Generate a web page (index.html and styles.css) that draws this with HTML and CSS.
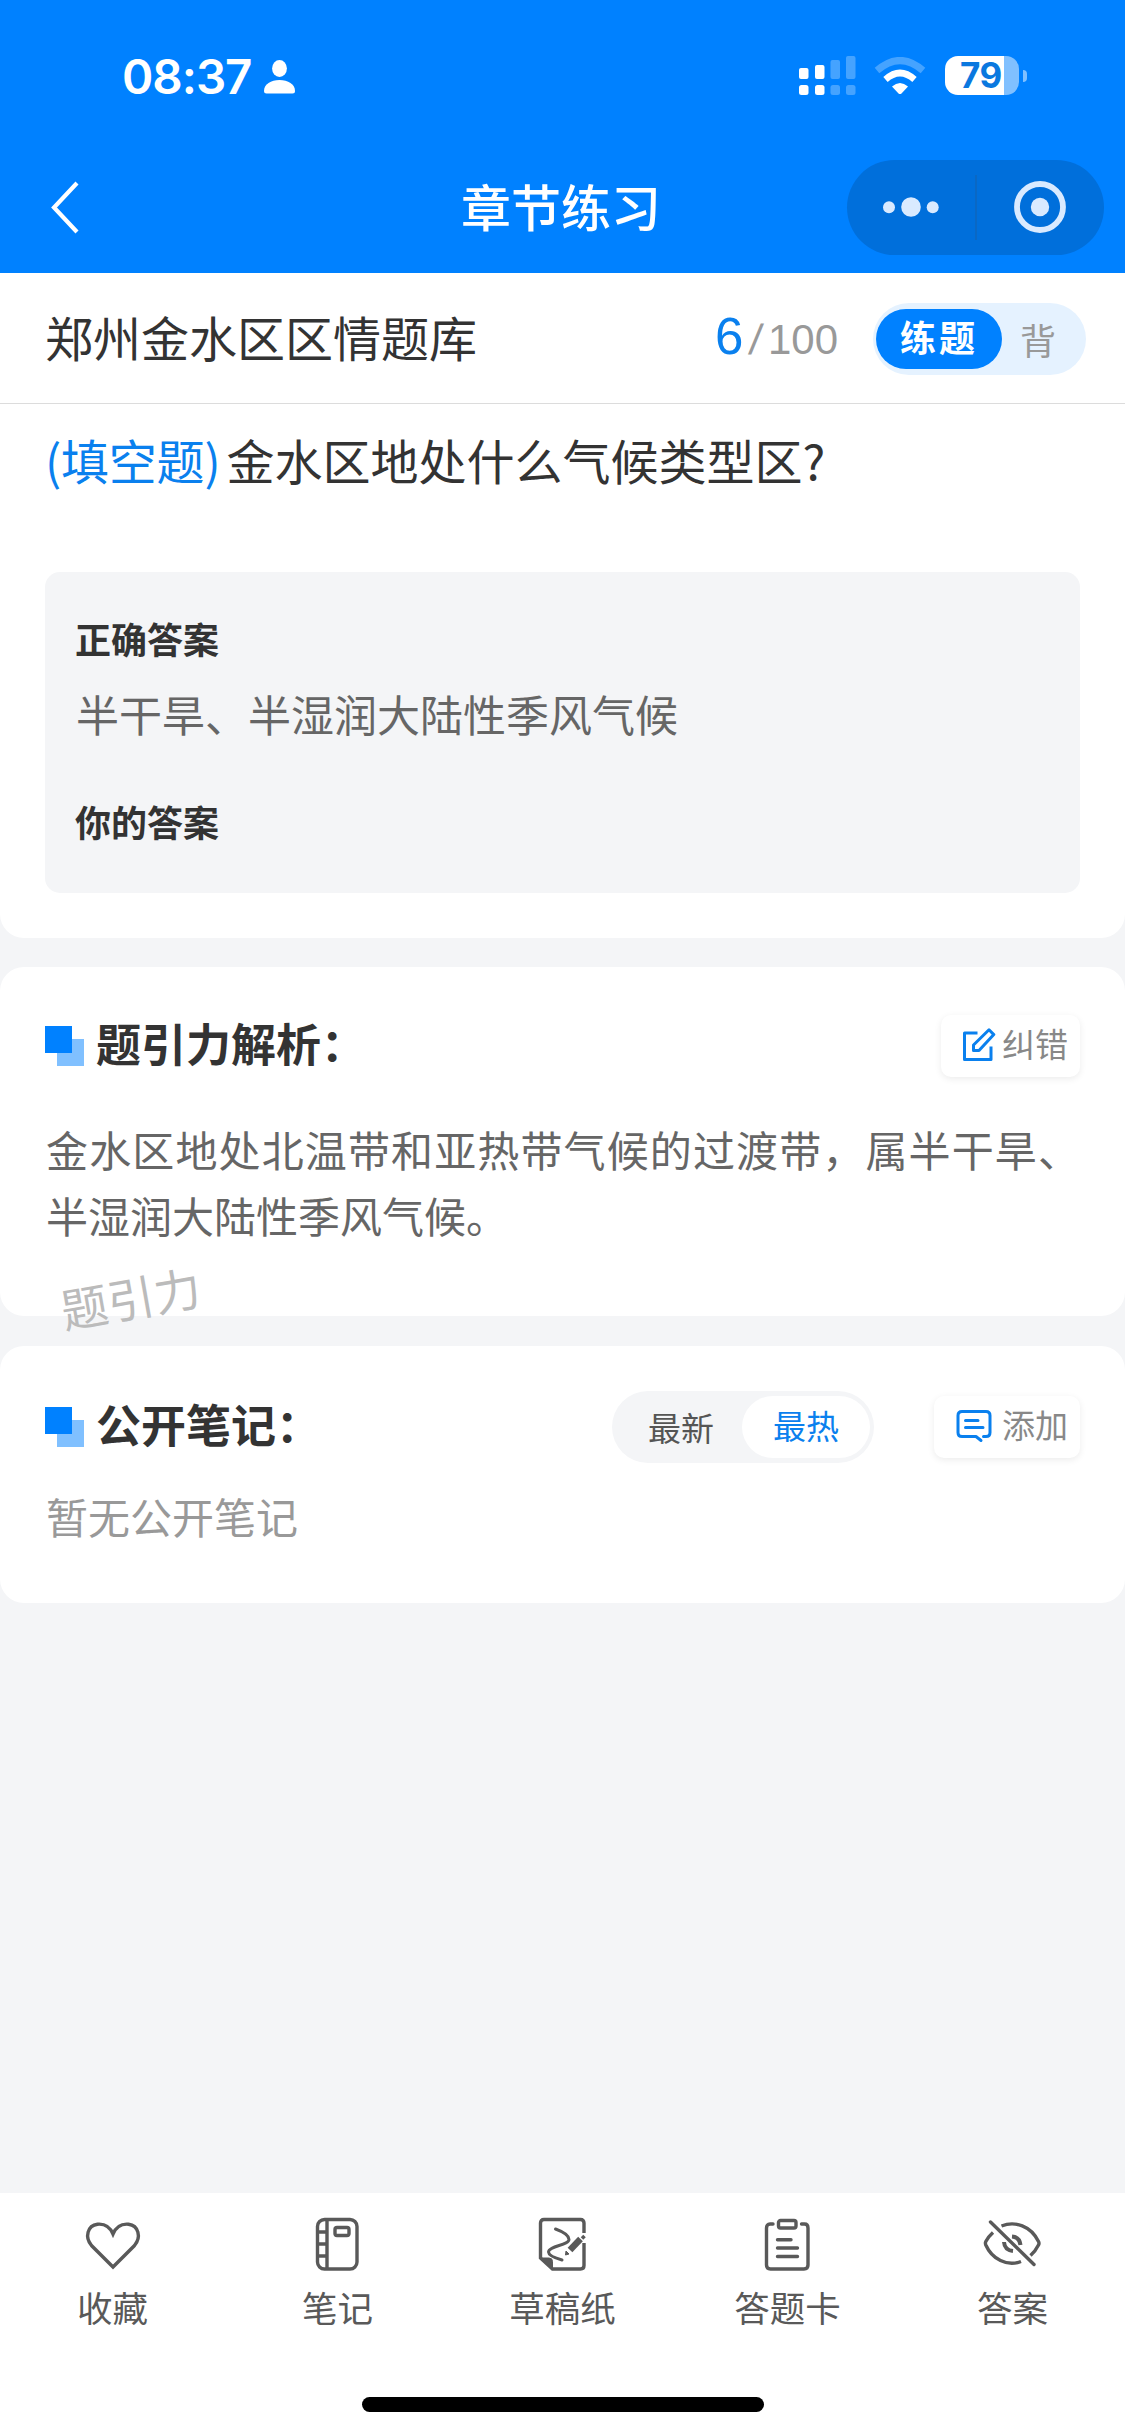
FILE: index.html
```html
<!DOCTYPE html>
<html lang="zh-CN">
<head>
<meta charset="UTF-8">
<title>章节练习</title>
<link rel="stylesheet" href="styles.css">
</head>
<body>
<div class="app">
  <header class="header">
    <div class="status">
      <div class="clock">
        <span class="time">08:37</span>
        <svg class="person" width="31" height="34" viewBox="0 0 31 34" fill="#fff"><ellipse cx="15.5" cy="8.5" rx="7.4" ry="8.5"/><path d="M0 31C0 24 7 20 15.500 20S31 24 31 31Q31 33.500 28.500 33.500H2.500Q0 33.500 0 31Z"/></svg>
      </div>
      <div class="indicators">
        <svg width="57" height="39" viewBox="0 0 57 39" fill="#fff"><rect y="12" width="9.500" height="11" rx="2"/><rect x="16" y="9" width="9.500" height="14" rx="2"/><rect y="29" width="9.500" height="10" rx="2.500"/><rect x="16" y="29" width="9.500" height="10" rx="2.500"/><g opacity=".27"><rect x="31.500" y="4" width="9.500" height="19" rx="2"/><rect x="47" width="9.500" height="23" rx="2"/><rect x="31.500" y="29" width="9.500" height="10" rx="2.500"/><rect x="47" y="29" width="9.500" height="10" rx="2.500"/></g></svg>
        <svg class="wifi" width="52" height="38" viewBox="0 0 52 38"><path d="M3 13.500Q26-6.500 49 13.500" fill="none" stroke="#fff" stroke-opacity=".27" stroke-width="7"/><path d="M11.500 22.500Q26 9.500 40.500 22.500" fill="none" stroke="#fff" stroke-width="6.500"/><path d="M18 29.500Q26 22.500 34 29.500L27.500 36.400Q26 37.500 24.500 36.400Z" fill="#fff"/></svg>
        <div class="battery"><span>79</span></div>
        <i class="nub"></i>
      </div>
    </div>
    <nav class="navbar">
      <svg class="back" width="30" height="54" viewBox="0 0 30 54" fill="none" stroke="#fff" stroke-width="4.200"><path d="M27 3L4 27.500 27 52"/></svg>
      <h1 class="nav-title">章节练习</h1>
      <div class="capsule">
        <svg width="56" height="20" viewBox="0 0 56 20" fill="#d9eaff"><circle cx="6" cy="10.300" r="6"/><circle cx="28" cy="10" r="9.800"/><circle cx="49.700" cy="10.300" r="6"/></svg>
        <i class="capsule-line"></i>
        <svg width="52" height="52" viewBox="0 0 52 52"><circle cx="26" cy="26" r="23" fill="none" stroke="#d9eaff" stroke-width="5.800"/><circle cx="26" cy="26" r="9.200" fill="#d9eaff"/></svg>
      </div>
    </nav>
  </header>

  <section class="bank">
    <h2 class="bank-name">郑州金水区区情题库</h2>
    <div class="progress"><b>6</b><span class="slash">/</span><span>100</span></div>
    <div class="mode"><span class="mode-on">练题</span><span class="mode-off">背</span></div>
  </section>

  <section class="card question">
    <p class="stem"><span class="kind">(填空题)</span>金水区地处什么气候类型区?</p>
    <div class="answers">
      <h3>正确答案</h3>
      <p>半干旱、半湿润大陆性季风气候</p>
      <h3>你的答案</h3>
    </div>
  </section>

  <section class="card analysis">
    <div class="card-head">
      <i class="mark"></i><h2>题引力解析：</h2>
      <button class="action fix">
        <svg width="34" height="34" viewBox="0 0 34 34" fill="none" stroke="#0a80ee" stroke-width="3" stroke-linejoin="round"><path d="M15.500 5H2.500V31.500H29V18.500"/><path d="M11.500 22.500V17L27 1.800 31.800 6.600 17 22.500Z"/></svg>
        <span>纠错</span>
      </button>
    </div>
    <p class="explain">金水区地处北温带和亚热带气候的过渡带，属半干旱、半湿润大陆性季风气候。</p>
    <span class="watermark">题引力</span>
  </section>

  <section class="card notes">
    <div class="card-head">
      <i class="mark"></i><h2>公开笔记：</h2>
      <div class="sort"><span>最新</span><span class="sort-on">最热</span></div>
      <button class="action add">
        <svg width="36" height="34" viewBox="0 0 36 34" fill="none" stroke="#0a80ee" stroke-width="3" stroke-linecap="round" stroke-linejoin="round"><path d="M27.500 27.500H30Q34 27.500 34 23.500V6.500Q34 2.500 30 2.500H6Q2 2.500 2 6.500V23.500Q2 27.500 6 27.500H20L25 31.500"/><path d="M9.500 11.500H22M9.500 18.500H27"/></svg>
        <span>添加</span>
      </button>
    </div>
    <p class="empty">暂无公开笔记</p>
  </section>

  <footer class="tabbar">
    <div class="tabs">
      <a class="tab"><svg width="60" height="56" viewBox="0 0 60 56"><path d="M30 50L8.500 28.500C1.500 20 4.500 8.500 14.500 7.200C22 6.500 27 10 30 17C33 10 38 6.500 45.500 7.200C55.500 8.500 58.500 20 51.500 28.500Z"/></svg>收藏</a>
      <a class="tab"><svg width="60" height="56" viewBox="0 0 60 56"><rect x="9.500" y="2.500" width="39.500" height="49.500" rx="7"/><path d="M19 2.500V52M9.500 15H19M9.500 27H19M9.500 39H19"/><rect x="27" y="10.500" width="14" height="8" rx="2"/></svg>笔记</a>
      <a class="tab"><svg width="60" height="56" viewBox="0 0 60 56"><path d="M51 16V6Q51 2.500 47.500 2.500H11Q7.500 2.500 7.500 6V41L19.500 52H47.500Q51 52 51 48.500V26"/><path class="solid" d="M7.500 41H16Q19.500 41 19.500 44.500V52Z"/><path d="M22.500 12C28 14 36 18 36 22.500C36 28 15.500 29 15.500 35C15.500 38 22 41 29 43" stroke-width="3" stroke-linecap="round"/><path d="M37 33L47.500 22" stroke-width="6.500"/><path d="M49 19L51.500 21.500" stroke-width="3.500"/><path class="solid" d="M33 34L36 37L32.500 38Z"/></svg>草稿纸</a>
      <a class="tab"><svg width="60" height="56" viewBox="0 0 60 56"><path d="M15 7H12Q8.500 7 8.500 11V48Q8.500 52 12.500 52H46Q50 52 50 48V11Q50 7 46.500 7H43.500" stroke-linecap="round"/><rect x="20.500" y="3.500" width="17.500" height="7.500" rx="2"/><path d="M19.500 22.700H33M19.500 31H39.500M19.500 39.500H39.500" stroke-linecap="round"/></svg>答题卡</a>
      <a class="tab"><svg width="60" height="56" viewBox="0 0 60 56"><path d="M18.500 9C32 3.500 48 9 55.500 24.500Q56.500 26.500 55.500 28Q52.500 34 47.500 38.500M38 44.500C24 50 9 42 2.800 28Q2 26 2.800 24.500Q5.500 19.500 10 15.500"/><path d="M7.500 5L51 47.500" stroke-linecap="round"/><path d="M29 19.500Q36.500 20 37.500 28M21 25Q21.500 33 30 34" stroke-width="4"/></svg>答案</a>
    </div>
    <i class="home-bar"></i>
  </footer>
</div>
</body>
</html>
```

FILE: styles.css
```css
* { box-sizing: border-box; margin: 0; padding: 0; }
i { display: block; font-style: normal; }
svg { display: block; flex: none; }

body {
  width: 1125px;
  background: #f4f5f7;
  font-family: "Noto Sans CJK SC", sans-serif;
  color: #333;
}

.app { display: flex; flex-direction: column; height: 2436px; overflow: hidden; }

/* Header */
.header { height: 273px; flex: none; background: #0081ff; color: #fff; }
.status { display: flex; justify-content: space-between; height: 151px; padding: 0 98px 0 122px; }
.clock { display: flex; align-items: center; gap: 10px; padding-top: 2px; }
.time { font: 600 47.500px/60px Inter, sans-serif; width: 132px; letter-spacing: -1px; }
.indicators { display: flex; align-items: center; }
.wifi { margin-left: 18px; }
.battery {
  width: 74px; height: 39px; margin-left: 19px; border-radius: 13px;
  background: linear-gradient(90deg, #fff 59px, #80c0ff 59px);
}
.battery span {
  display: block; padding-left: 15px;
  font: 700 35px/39px Inter, sans-serif; letter-spacing: -0.5px; color: #0a78df;
}
.nub { width: 4px; height: 12px; margin-left: 4px; border-radius: 0 4px 4px 0; background: #80c0ff; }

.navbar { display: flex; align-items: center; height: 112px; padding: 0 21px 0 50px; }
.back { margin-right: 381px; }
.nav-title { width: 210px; padding-bottom: 4px; font-weight: 500; font-size: 50px; line-height: 80px; }
.capsule {
  display: flex; align-items: center; width: 257px; height: 95px;
  margin-left: auto; padding: 0 38px 0 36px; border-radius: 48px; background: #006fdb;
}
.capsule-line { width: 2px; height: 65px; margin: 0 auto 0 36px; background: #0a68c4; }

/* Question bank bar */
.bank {
  display: flex; align-items: center; flex: none; height: 131px; padding: 0 39px 0 45px;
  background: #fff; border-bottom: 1px solid #dcdcdc;
}
.bank-name { padding-bottom: 4px; font-size: 48px; font-weight: 400; line-height: 70px; }
.progress {
  display: flex; align-items: baseline; margin-left: auto; margin-right: 35px;
  font: 42px/60px "Liberation Sans", sans-serif; color: #999;
}
.progress b { font-weight: 400; font-size: 51px; color: #0a80ee; }
.slash { margin: 0 6px 0 7px; transform: skewX(-8deg); }
.mode { display: flex; align-items: center; width: 213px; height: 72px; margin-top: 2px; padding: 0 3px; border-radius: 36px; background: #e5f2ff; font-size: 36px; }
.mode-on {
  width: 126px; height: 60px; padding-left: 24px; border-radius: 30px; background: #0081ff;
  color: #fff; font-weight: 700; line-height: 55px; letter-spacing: 3px;
}
.mode-off { margin-left: 18px; line-height: 54px; color: #999; }

/* Cards */
.card { flex: none; background: #fff; border-radius: 24px; }
.question { height: 534px; padding: 20px 45px 0; border-radius: 0 0 24px 24px; }
.stem { height: 70px; font-size: 48px; line-height: 70px; }
.kind { margin-right: 6px; letter-spacing: -0.200px; color: #0a80ee; }
.answers { height: 321px; margin-top: 78px; padding: 39px 31px; border-radius: 15px; background: #f4f5f7; }
.answers h3 { margin-left: -1px; font-size: 36px; font-weight: 700; line-height: 54px; }
.answers p { margin: 13px 0 46px; font-size: 43px; line-height: 70px; color: #666; }

.card-head { display: flex; align-items: center; height: 72px; }
.card-head h2 { padding-bottom: 6px; font-size: 45px; font-weight: 700; line-height: 64px; }
.mark {
  width: 39px; height: 40px; margin-right: 12px;
  background: linear-gradient(#0081ff, #0081ff) 0 0 / 27px 27px no-repeat, linear-gradient(#80c0ff, #80c0ff) 12px 13px / 27px 27px no-repeat;
}
.action {
  display: flex; align-items: center; height: 62px; border: 0; border-radius: 10px;
  background: #fff; box-shadow: 0 2px 7px rgba(0, 0, 0, .08);
  font: 33px/56px "Noto Sans CJK SC", sans-serif; color: #888;
}
.action span { padding-bottom: 6px; }
.action svg { margin-bottom: 3px; }
.fix { width: 139px; margin-left: auto; padding-left: 21px; gap: 6px; }
.add { width: 146px; margin-left: 60px; padding-left: 22px; gap: 10px; }

.analysis { position: relative; height: 349px; margin-top: 29px; padding: 43px 45px 0; }
.explain { margin-top: 34px; padding-left: 1px; font-size: 42px; line-height: 66px; text-align: justify; color: #666; }
.watermark {
  position: absolute; left: 60px; top: 296px; z-index: 1;
  font-size: 47px; line-height: 68px; color: #bbb; transform: rotate(-10deg);
}

.notes { height: 257px; margin-top: 30px; padding: 45px 45px 0; }
.sort { display: flex; align-items: center; width: 262px; height: 72px; margin-left: auto; padding: 0 4px 0 36px; border-radius: 36px; background: #f4f5f7; font-size: 33px; line-height: 58px; color: #555; }
.sort-on { width: 128px; height: 62px; margin-left: auto; border-radius: 31px; background: #fff; color: #0a80ee; text-align: center; }
.empty { margin-top: 20px; padding-left: 1px; font-size: 42px; line-height: 66px; color: #999; }

/* Bottom tab bar */
.tabbar { display: flex; flex-direction: column; align-items: center; height: 243px; margin-top: auto; flex: none; background: #fff; }
.tabs { display: flex; width: 100%; }
.tab { display: flex; flex-direction: column; align-items: center; flex: 1; padding-top: 24px; font-size: 35.500px; line-height: 54px; color: #595959; }
.tab svg { margin-bottom: 7px; fill: none; stroke: #595959; stroke-width: 3.400; }
.tab .solid { fill: #595959; stroke-width: 1; }
.home-bar { width: 402px; height: 15px; margin-top: 63px; border-radius: 8px; background: #000; }
```
